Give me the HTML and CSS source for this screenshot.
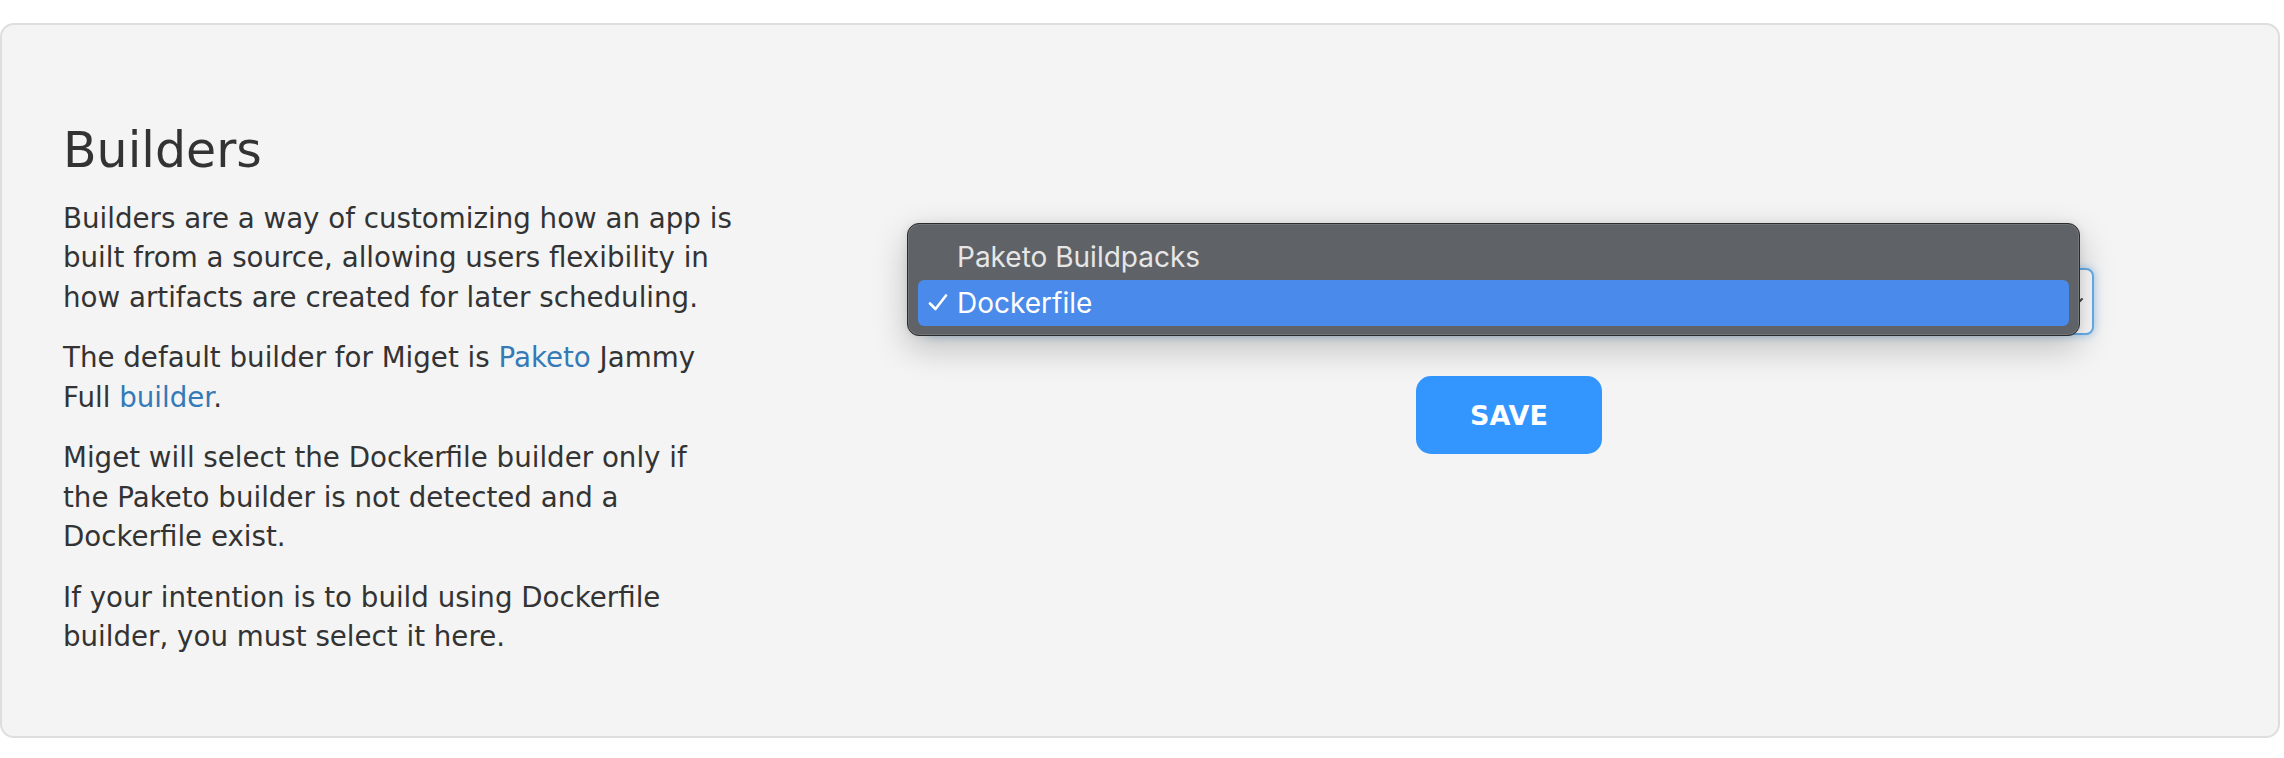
FILE: index.html
```html
<!DOCTYPE html>
<html lang="en">
<head>
    <meta charset="UTF-8">
    <meta name="viewport" content="width=device-width, initial-scale=1.0">
    <title>Builders</title>
    <link rel="stylesheet" href="styles.css">
</head>
<body>
    <div class="card">
        <div class="info">
            <h2>Builders</h2>
            <p>Builders are a way of customizing how an app is built from a source, allowing users flexibility in how artifacts are created for later scheduling.</p>
            <p>The default builder for Miget is <a href="#">Paketo</a> Jammy Full <a href="#">builder</a>.</p>
            <p>Miget will select the Dockerfile builder only if the Paketo builder is not detected and a Dockerfile exist.</p>
            <p>If your intention is to build using Dockerfile builder, you must select it here.</p>
        </div>

        <form class="builder-form">
            <div class="select-wrap">
                <div class="select-box">
                    <span>Dockerfile</span>
                    <svg class="chevron" width="16" height="10" viewBox="0 0 16 10">
                        <polyline points="2,2 8,8 14,2" fill="none" stroke="#444" stroke-width="2" stroke-linecap="round" stroke-linejoin="round"/>
                    </svg>
                </div>
                <!-- open native menu -->
                <ul class="menu">
                    <li class="menu-item">Paketo Buildpacks</li>
                    <li class="menu-item selected">
                        <svg class="check" width="20" height="17" viewBox="0 0 20 17">
                            <polyline points="2,9.5 7.5,15 18,1.5" fill="none" stroke="#fff" stroke-width="2.6" stroke-linecap="round" stroke-linejoin="round"/>
                        </svg>
                        Dockerfile
                    </li>
                </ul>
            </div>
            <button type="button" class="btn-save">SAVE</button>
        </form>
    </div>
</body>
</html>
```

FILE: styles.css
```css
body {
    margin: 0;
    font-family: "DejaVu Sans", sans-serif;
    color: #333;
    background: #fff;
}
.card {
    display: flex;
    gap: 64px;
    margin: 23px 4px 0 0;
    padding: 97px 61px 79px 61px;
    background: #f4f4f4;
    border: 2px solid #dedede;
    border-radius: 14px;
}
.info {
    flex: none;
    width: 674px;
}
.info h2 {
    margin: 0 0 18px;
    font-size: 49px;
    font-weight: normal;
    line-height: 1.2;
    color: #333;
}
.info p {
    margin: 0 0 21px;
    font-size: 27.7px;
    line-height: 39.5px;
}
.info p:last-child {
    margin-bottom: 0;
}
.info a {
    color: #337ab7;
    text-decoration: none;
}
.builder-form {
    flex: 1;
    display: flex;
    flex-direction: column;
    align-items: center;
    padding-top: 146px;
}
.select-wrap {
    position: relative;
    width: 1170px;
}
.select-box {
    box-sizing: border-box;
    height: 67px;
    display: flex;
    align-items: center;
    justify-content: space-between;
    padding: 0 8px 0 33px;
    background: #fbfbfb;
    border: 2px solid #66afe9;
    border-radius: 8px;
    box-shadow: 0 0 10px rgba(102, 175, 233, 0.6);
    font-family: Inter, sans-serif;
    font-size: 28px;
    color: #333;
}
.menu {
    position: absolute;
    top: -45px;
    left: -17px;
    right: 14px;
    margin: 0;
    padding: 10px 10px 9px;
    list-style: none;
    background: #5f6266;
    border: 1px solid #2a2b2d;
    border-radius: 12px;
    box-shadow: inset 0 0 0 1px rgba(255, 255, 255, 0.12), 0 12px 34px rgba(0, 0, 0, 0.22), 0 0 8px rgba(0, 0, 0, 0.08);
}
.menu-item {
    position: relative;
    height: 46px;
    padding-left: 39px;
    font-family: Inter, sans-serif;
    font-size: 28px;
    line-height: 46px;
    color: #e6e6e6;
}
.menu-item.selected {
    background: #4a8aea;
    border-radius: 6px;
    color: #fff;
}
.check {
    position: absolute;
    left: 10px;
    top: 14px;
}
.btn-save {
    width: 186px;
    height: 78px;
    margin-top: 41px;
    background: #3396ff;
    border: none;
    border-radius: 15px;
    color: #fff;
    font-family: "DejaVu Sans", sans-serif;
    font-size: 27px;
    font-weight: bold;
    cursor: pointer;
}
```
